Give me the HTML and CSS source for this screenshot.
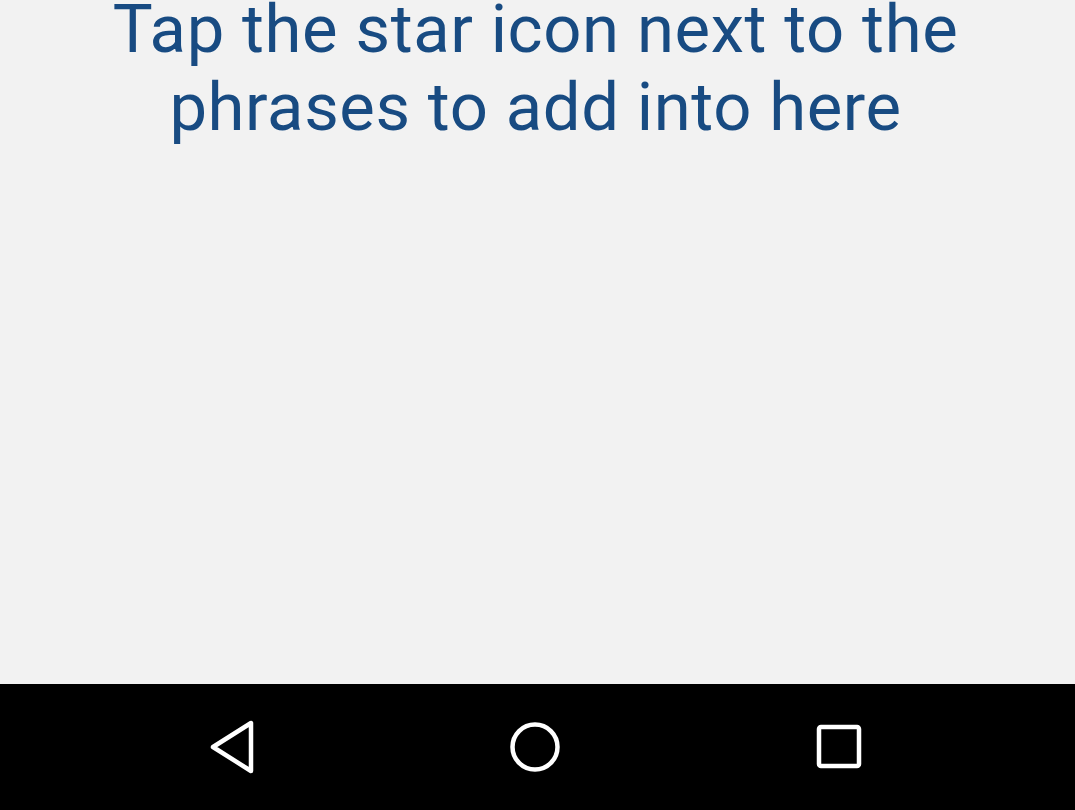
FILE: index.html
```html
<!DOCTYPE html>
<html>
<head>
<meta charset="utf-8">
<link rel="stylesheet" href="styles.css">
</head>
<body>
<div class="screen">
  <main class="content">
    <p class="hint">Tap the star icon next to the<br>phrases to add into here</p>
  </main>
  <nav class="navbar">
    <button class="nav-btn" aria-label="Back">
      <svg width="48" height="54" viewBox="0 0 48 54"><path d="M43 3 L43 51 L5 27 Z" fill="none" stroke="#fff" stroke-width="4.5" stroke-linejoin="round"/></svg>
    </button>
    <button class="nav-btn" aria-label="Home">
      <svg width="52" height="52" viewBox="0 0 52 52"><circle cx="26" cy="26" r="22.5" fill="none" stroke="#fff" stroke-width="4.5"/></svg>
    </button>
    <button class="nav-btn" aria-label="Recents">
      <svg width="46" height="46" viewBox="0 0 46 46"><rect x="3" y="3" width="40" height="39" rx="2" fill="none" stroke="#fff" stroke-width="4.5"/></svg>
    </button>
  </nav>
</div>
</body>
</html>
```
FILE: styles.css
```css
html, body {
  margin: 0;
  padding: 0;
}
body {
  background: #f2f2f2;
  font-family: Roboto, "Liberation Sans", sans-serif;
}
.screen {
  width: 1075px;
  height: 810px;
  display: flex;
  flex-direction: column;
  overflow: hidden;
}
.content {
  flex: 1;
  display: flex;
  justify-content: center;
}
.hint {
  margin: -10px 0 0 -4px;
  font-size: 67px;
  line-height: 78px;
  letter-spacing: 0.6px;
  color: #184b82;
  text-align: center;
}
.navbar {
  height: 126px;
  background: #000;
  display: grid;
  grid-template-columns: 1fr 1fr 1fr;
  align-items: center;
  justify-items: center;
  padding: 0 84px 0 80px;
}
.nav-btn {
  background: none;
  border: 0;
  padding: 0;
  display: flex;
  align-items: center;
  justify-content: center;
}
.nav-btn svg {
  display: block;
}
```
